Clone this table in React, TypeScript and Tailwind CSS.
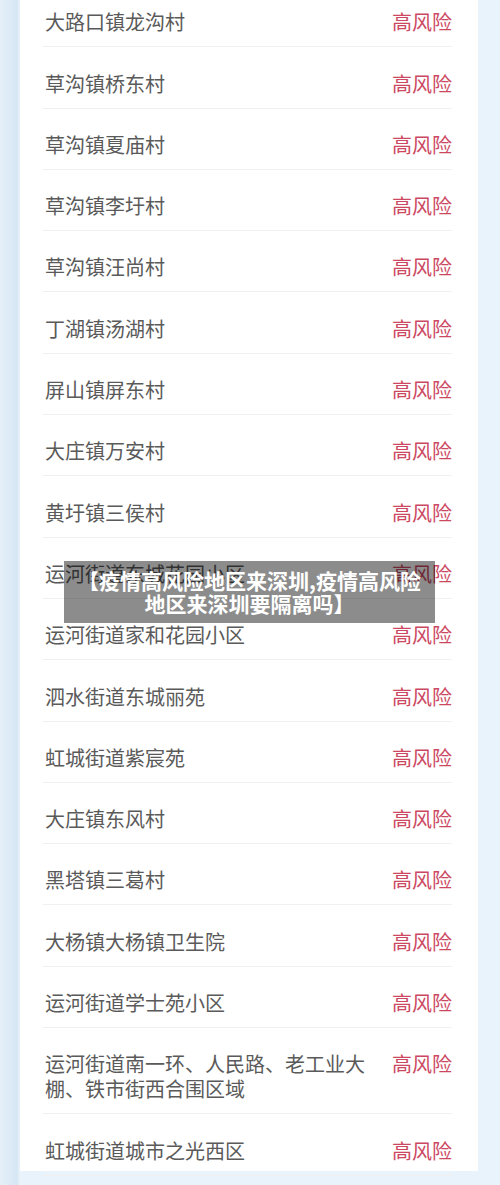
import React from 'react';

const places: string[] = [
    '大路口镇龙沟村',
    '草沟镇桥东村',
    '草沟镇夏庙村',
    '草沟镇李圩村',
    '草沟镇汪尚村',
    '丁湖镇汤湖村',
    '屏山镇屏东村',
    '大庄镇万安村',
    '黄圩镇三侯村',
    '运河街道东城花园小区',
    '运河街道家和花园小区',
    '泗水街道东城丽苑',
    '虹城街道紫宸苑',
    '大庄镇东风村',
    '黑塔镇三葛村',
    '大杨镇大杨镇卫生院',
    '运河街道学士苑小区',
    '运河街道南一环、人民路、老工业大棚、铁市街西合围区域',
    '虹城街道城市之光西区',
];

const RiskRow: React.FC<{ name: string }> = ({ name }) => (
    <div className="flex items-start gap-[20px] border-b border-[#f0f0f0] pt-[23.3px] pb-[12px]">
        <div className="flex-1 pl-[2px] text-[20px] leading-[25px] text-[#5a5a5a]">{name}</div>
        <div className="shrink-0 text-[20px] leading-[25px] text-[#cc4862]">高风险</div>
    </div>
);

export default function App() {
    return (
        <div
            className="relative h-[1185px] w-[500px] overflow-hidden bg-[linear-gradient(90deg,#e5f0f8_0px,#d6e7f4_17px,#e9f3fb_20px)] pl-[20px] pr-[22px]"
            style={{ fontFamily: '"Noto Sans CJK SC", "Noto Sans", sans-serif' }}
        >
            {/* list card */}
            <div className="h-full bg-white pl-[23px] pr-[26px]">
                <div className="-mt-[14px]">
                    {places.map((p) => (
                        <RiskRow key={p} name={p} />
                    ))}
                </div>
            </div>

            {/* title overlay */}
            <div className="absolute left-[64px] top-[561px] w-[371px] bg-black/45 px-[10px] py-[8px] text-center text-[21px] font-bold leading-[23px] text-white">
                【疫情高风险地区来深圳,疫情高风险地区来深圳要隔离吗】
            </div>
        </div>
    );
}
